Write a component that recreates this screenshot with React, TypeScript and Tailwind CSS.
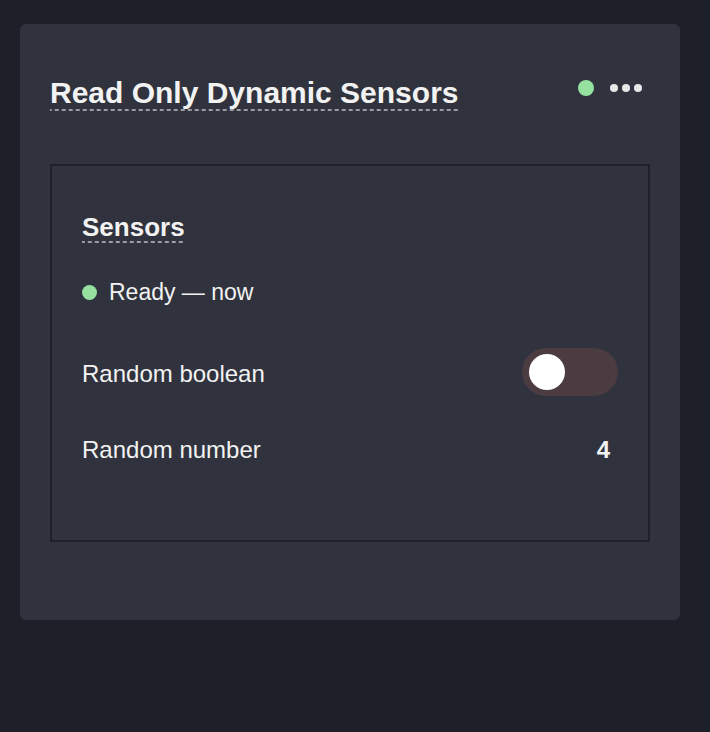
const dashed =
  "bg-[linear-gradient(to_right,#9b9da3_4px,transparent_4px)] bg-[length:7px_2px] bg-bottom bg-repeat-x";

function Toggle() {
  return (
    <div className="flex h-12 w-24 items-center rounded-full bg-[#4b3c42] px-[7px]">
      <div className="h-9 w-9 rounded-full bg-white" />
    </div>
  );
}

export default function App() {
  return (
    <div
      className="min-h-screen bg-[#1e2029] px-5 pt-6 text-[#f2f2f2]"
      style={{ fontFamily: '"Liberation Sans", Arial, sans-serif' }}
    >
      <div className="h-[596px] w-[660px] rounded-md bg-[#30333d] px-[30px] pt-[52px]">
        <div className="flex items-start justify-between">
          <h1 className={`inline-block pb-px text-[30px] font-bold leading-[34px] ${dashed}`}>
            Read Only Dynamic Sensors
          </h1>
          <div className="mr-2 mt-1 flex h-4 items-center">
            <span className="h-4 w-4 rounded-full bg-[#96e0a0]" />
            <div className="ml-4 flex items-center gap-1">
              <span className="h-2 w-2 rounded-full bg-[#e8e8e8]" />
              <span className="h-2 w-2 rounded-full bg-[#e8e8e8]" />
              <span className="h-2 w-2 rounded-full bg-[#e8e8e8]" />
            </div>
          </div>
        </div>

        <section className="mt-[53px] h-[378px] border-2 border-[#1f2128] px-[30px] pt-[46px]">
          <h2 className={`inline-block pb-px text-[26px] font-bold leading-[30px] ${dashed}`}>
            Sensors
          </h2>

          <div className="mt-9 flex items-center gap-3 text-[23px] leading-[26px]">
            <span className="h-[15px] w-[15px] rounded-full bg-[#96e0a0]" />
            <span>Ready — now</span>
          </div>

          <div className="mt-[43px] flex h-12 items-center justify-between text-[24px] leading-[28px]">
            <span className="pt-1">Random boolean</span>
            <Toggle />
          </div>

          <div className="mt-10 flex items-center justify-between text-[24px] leading-[28px]">
            <span>Random number</span>
            <span className="mr-2 font-bold">4</span>
          </div>
        </section>
      </div>
    </div>
  );
}
